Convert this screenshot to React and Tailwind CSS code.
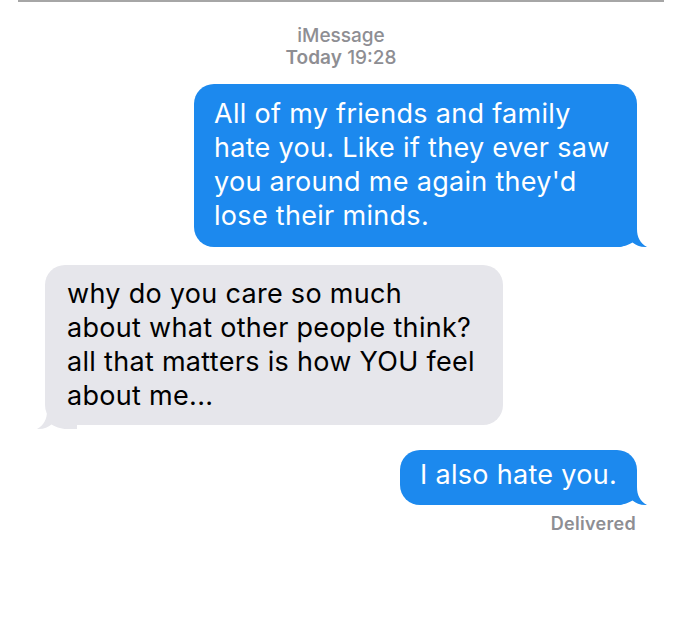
import React from "react";

// bubble tail drawn over the bottom corner of a bubble
function Tail({ color, side = "right" }) {
    const pos = side === "right" ? "right-[-10px] bottom-[-2px]" : "left-[-8px] bottom-[-6px] -scale-x-100";
    return (
        <svg className={`absolute ${pos}`} width="40" height="32" viewBox="0 0 40 32">
            <path
                d="M0 0 L30 0 L30 12 C30 20 33 26 40 30 C34 30.5 29 28.5 25.5 25.5 C22 27.5 17 30 10 30 L0 30 Z"
                fill={color}
            />
        </svg>
    );
}

function Bubble({ lines, from = "me", className = "" }) {
    const me = from === "me";
    const color = me ? "#1c89ee" : "#e6e6eb";
    return (
        <div
            className={`relative rounded-[20px] text-[27px] leading-[34px] tracking-[0.3px] ${
                me ? "bg-[#1c89ee] text-white" : "bg-[#e6e6eb] text-black"
            } ${className}`}
        >
            {lines.map((l, i) => (
                <div key={i} className="relative z-10 whitespace-nowrap">{l}</div>
            ))}
            <Tail color={color} side={me ? "right" : "left"} />
        </div>
    );
}

export default function App() {
    return (
        <div className="w-[700px] h-[639px] bg-white overflow-hidden font-['Inter',sans-serif]">
            <div className="ml-[18px] w-[646px] h-[2px] bg-[#a6a6a6]" />

            {/* header */}
            <div className="pt-[23px] pr-[18px] flex flex-col items-center text-[19px] leading-[22px] text-[#8e8e93]">
                <div className="font-medium">iMessage</div>
                <div>
                    <span className="font-semibold">Today</span> <span className="font-medium">19:28</span>
                </div>
            </div>

            <div className="mt-[15px] flex flex-col">
                <div className="flex justify-end pr-[63px]">
                    <Bubble
                        className="w-[443px] pl-[20px] pt-[13px] pb-[14px]"
                        lines={[
                            "All of my friends and family",
                            "hate you. Like if they ever saw",
                            "you around me again they'd",
                            "lose their minds.",
                        ]}
                    />
                </div>

                <div className="mt-[18px] pl-[45px] flex">
                    <Bubble
                        from="them"
                        className="w-[458px] pl-[22px] pt-[12px] pb-[12px]"
                        lines={[
                            "why do you care so much",
                            "about what other people think?",
                            "all that matters is how YOU feel",
                            "about me...",
                        ]}
                    />
                </div>

                <div className="mt-[25px] flex justify-end pr-[63px]">
                    <Bubble className="w-[237px] pl-[20px] pt-[8px] pb-[13px]" lines={["I also hate you."]} />
                </div>

                <div className="mt-[8px] pr-[64px] text-right text-[18px] leading-[22px] tracking-[0.3px] font-semibold text-[#8e8e93]">
                    Delivered
                </div>
            </div>
        </div>
    );
}
